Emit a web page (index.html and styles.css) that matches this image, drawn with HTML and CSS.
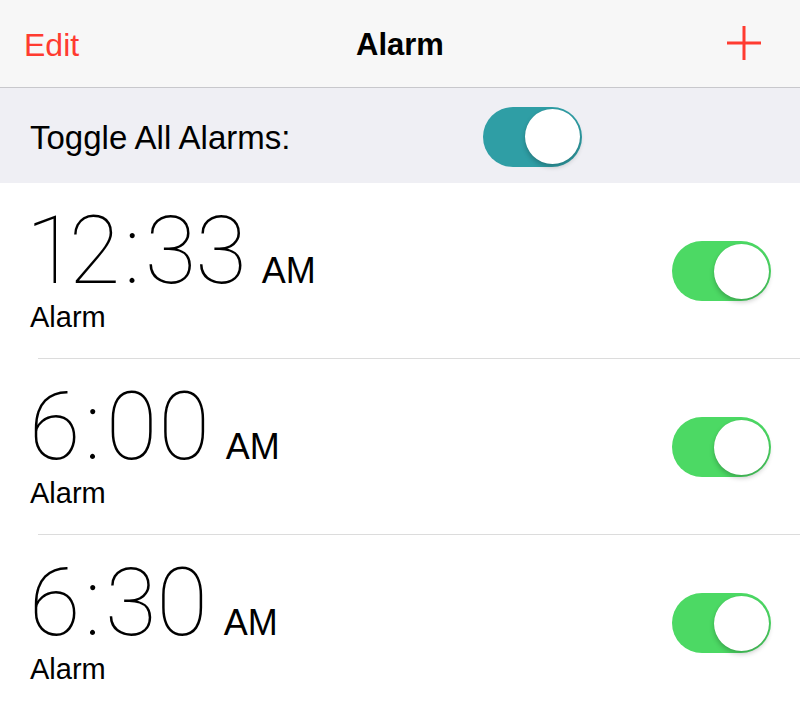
FILE: index.html
```html
<!DOCTYPE html>
<html lang="en">
<head>
<meta charset="utf-8">
<title>Alarm</title>
<link rel="stylesheet" href="styles.css">
</head>
<body>
	<header class="navbar">
		<a class="nav-edit" href="#">Edit</a>
		<h1 class="nav-title">Alarm</h1>
		<a class="nav-add" href="#" aria-label="Add alarm">
			<svg width="36" height="34" viewBox="0 0 36 34"><path d="M18 0V34M1 17H35" stroke="#ff3b30" stroke-width="3" fill="none"/></svg>
		</a>
	</header>

	<div class="toggle-all">
		<span class="toggle-all-label">Toggle All Alarms:</span>
		<span class="switch switch-teal"><span class="knob"></span></span>
	</div>

	<ul class="alarms">
		<li class="alarm">
			<div class="alarm-info">
				<div class="alarm-time"><span class="digits">12<span class="colon">:</span>33</span><span class="ampm">AM</span></div>
				<div class="alarm-label">Alarm</div>
			</div>
			<span class="switch"><span class="knob"></span></span>
		</li>
		<li class="alarm">
			<div class="alarm-info">
				<div class="alarm-time"><span class="digits">6<span class="colon">:</span>00</span><span class="ampm">AM</span></div>
				<div class="alarm-label">Alarm</div>
			</div>
			<span class="switch"><span class="knob"></span></span>
		</li>
		<li class="alarm">
			<div class="alarm-info">
				<div class="alarm-time"><span class="digits">6<span class="colon">:</span>30</span><span class="ampm">AM</span></div>
				<div class="alarm-label">Alarm</div>
			</div>
			<span class="switch"><span class="knob"></span></span>
		</li>
	</ul>
</body>
</html>
```

FILE: styles.css
```css
html {
	background: #fff;
}
body {
	margin: 0;
	font-family: "Liberation Sans", Arial, sans-serif;
	color: #000;
	overflow: hidden;
}

/* top bar */
.navbar {
	display: grid;
	grid-template-columns: 1fr auto 1fr;
	align-items: center;
	height: 88px;
	padding: 2px 24px 0 24px;
	box-sizing: border-box;
	background: #f7f7f7;
	border-bottom: 1px solid #c8c8cc;
}
.nav-edit {
	font-size: 32px;
	line-height: 1;
	color: #ff3b30;
	text-decoration: none;
}
.nav-title {
	margin: 0;
	font-size: 31px;
	line-height: 1;
	font-weight: bold;
}
.nav-add {
	justify-self: end;
	display: flex;
	margin: -4px 14px 0 0;
}

/* master toggle */
.toggle-all {
	display: grid;
	grid-template-columns: 453px 98px;
	align-items: center;
	height: 95px;
	padding: 2px 0 0 30px;
	box-sizing: border-box;
	background: #efeff4;
}
.toggle-all-label {
	font-size: 33px;
	line-height: 1;
	padding-top: 2px;
}

/* switches */
.switch {
	display: flex;
	justify-content: flex-end;
	align-items: center;
	width: 99px;
	height: 60px;
	padding: 0 2px;
	box-sizing: border-box;
	border-radius: 30px;
	background: #4cd964;
}
.switch-teal {
	background: #2f9ea5;
}
.switch .knob {
	width: 55px;
	height: 55px;
	border-radius: 50%;
	background: #fff;
	box-shadow: 0 3px 5px rgba(0,0,0,0.22), 0 0 1px rgba(0,0,0,0.1);
}

/* alarm list */
.alarms {
	list-style: none;
	margin: 0;
	padding: 0;
}
.alarm {
	display: flex;
	justify-content: space-between;
	align-items: center;
	height: 176px;
	padding: 0 29px 0 30px;
	box-sizing: border-box;
	background: linear-gradient(#dcdcdc, #dcdcdc) no-repeat 38px 100% / calc(100% - 38px) 1px;
}
.alarm-info {
	padding-bottom: 6px;
}
.alarm-time {
	display: flex;
	align-items: baseline;
	gap: 16px;
}
.alarm-time .digits {
	font-family: Roboto, sans-serif;
	font-weight: 100;
	font-size: 94px;
	line-height: 1;
	letter-spacing: -1px;
	margin-left: -2px;
	font-variant-numeric: proportional-nums;
}
.alarm-time .colon {
	margin: 0 5px;
}
.alarm-time .ampm {
	font-size: 36px;
	line-height: 1;
}
.alarm-label {
	margin-top: 5px;
	font-size: 29px;
	line-height: 1;
}
```
